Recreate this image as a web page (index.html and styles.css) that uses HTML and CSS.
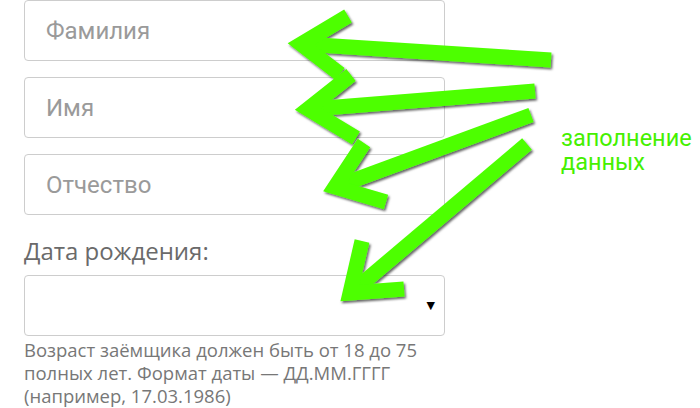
FILE: index.html
```html
<!DOCTYPE html>
<html lang="ru">
<head>
<meta charset="utf-8">
<title>Форма</title>
<link rel="stylesheet" href="styles.css">
</head>
<body>
<div class="page">
  <form class="form">
    <input class="field" type="text" placeholder="Фамилия">
    <input class="field" type="text" placeholder="Имя">
    <input class="field" type="text" placeholder="Отчество">
    <div class="label">Дата рождения:</div>
    <div class="select"><span class="caret">▼</span></div>
    <p class="hint">Возраст заёмщика должен быть от 18 до 75 полных лет. Формат даты — ДД.ММ.ГГГГ (например, 17.03.1986)</p>
  </form>
  <div class="note">заполнение<br>данных</div>
  <svg class="arrows" width="700" height="408" viewBox="0 0 700 408">
    <defs>
      <filter id="sh" x="-20%" y="-20%" width="140%" height="140%">
        <feDropShadow dx="1.5" dy="2" stdDeviation="1.2" flood-color="#000" flood-opacity="0.6"/>
      </filter>
    </defs>
    <g fill="none" stroke="#4dff00" stroke-width="15" stroke-linejoin="miter" stroke-miterlimit="6" filter="url(#sh)">
      <g>
        <path d="M551 60 L303 44"/>
        <path d="M348 16 L301 44 L340 74"/>
      </g>
      <g>
        <path d="M535 91 L312 109"/>
        <path d="M351 75 L308 109 L356 138"/>
      </g>
      <g>
        <path d="M531 115 L338 186"/>
        <path d="M364 143 L335 187 L386 202"/>
      </g>
      <g>
        <path d="M527 144 L352 292"/>
        <path d="M362 241 L350 293 L404 289"/>
      </g>
    </g>
  </svg>
</div>
</body>
</html>
```
FILE: styles.css
```css
html, body {
  margin: 0;
  padding: 0;
  background: #fff;
}
.page {
  position: relative;
  width: 700px;
  height: 408px;
  overflow: hidden;
}
.form {
  display: flex;
  flex-direction: column;
  width: 421px;
  padding: 0 0 0 24px;
  margin: 0;
}
.field {
  box-sizing: border-box;
  height: 61px;
  margin: 0 0 16px 0;
  border: 1px solid #cdcdcd;
  border-radius: 4px;
  padding: 0 0 0 21px;
  font-family: Roboto, "Noto Sans", sans-serif;
  font-size: 24px;
  color: #333;
  background: #fff;
  outline: none;
}
.field::placeholder {
  color: #9a9a9a;
}
.label {
  margin-top: 4px;
  font-family: "Open Sans", "Noto Sans", sans-serif;
  font-size: 24px;
  line-height: 32px;
  color: #6a6a6a;
}
.select {
  box-sizing: border-box;
  height: 61px;
  margin-top: 8px;
  border: 1px solid #cdcdcd;
  border-radius: 4px;
  display: flex;
  align-items: center;
  justify-content: flex-end;
  padding-right: 9px;
}
.caret {
  font-family: "DejaVu Sans", sans-serif;
  font-size: 11px;
  color: #000;
}
.hint {
  margin: 2px 0 0 0;
  font-family: "Open Sans", "Noto Sans", sans-serif;
  font-size: 18.5px;
  line-height: 23px;
  color: #777;
}
.note {
  position: absolute;
  left: 561px;
  top: 126px;
  font-family: Roboto, sans-serif;
  font-size: 23.5px;
  line-height: 24px;
  color: #45f000;
}
.arrows {
  position: absolute;
  left: 0;
  top: 0;
  pointer-events: none;
}
```
